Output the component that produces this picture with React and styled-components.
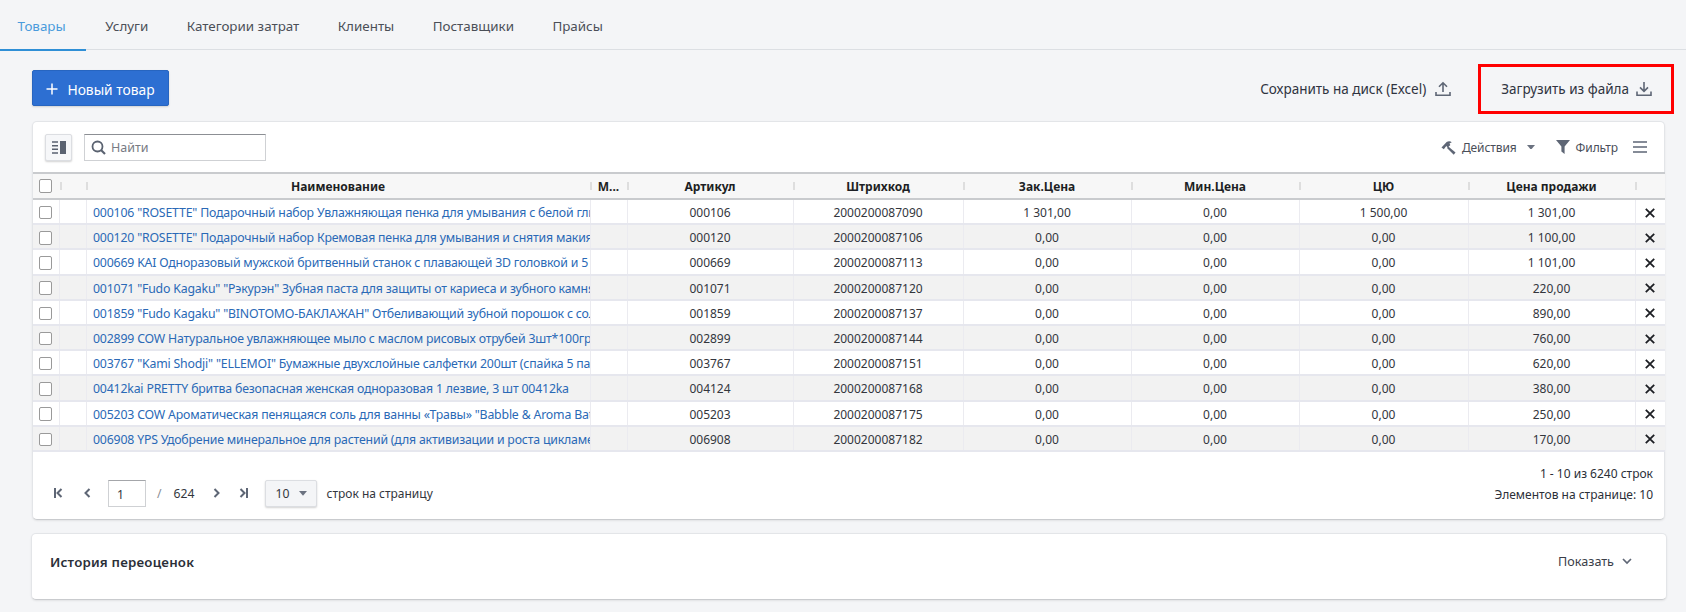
import React from 'react';
import styled, { createGlobalStyle } from 'styled-components';

const tabs = ['Товары', 'Услуги', 'Категории затрат', 'Клиенты', 'Поставщики', 'Прайсы'];

const rows = [
    { name: '000106 "ROSETTE" Подарочный набор Увлажняющая пенка для умывания с белой глиной', sku: '000106', code: '2000200087090', buy: '1 301,00', cyu: '1 500,00', price: '1 301,00' },
    { name: '000120 "ROSETTE" Подарочный набор Кремовая пенка для умывания и снятия макияжа', sku: '000120', code: '2000200087106', buy: '0,00', cyu: '0,00', price: '1 100,00' },
    { name: '000669 KAI Одноразовый мужской бритвенный станок с плавающей 3D головкой и 5 лезвиями', sku: '000669', code: '2000200087113', buy: '0,00', cyu: '0,00', price: '1 101,00' },
    { name: '001071 "Fudo Kagaku" "Рэкурэн" Зубная паста для защиты от кариеса и зубного камня', sku: '001071', code: '2000200087120', buy: '0,00', cyu: '0,00', price: '220,00' },
    { name: '001859 "Fudo Kagaku" "BINOTOMO-БАКЛАЖАН" Отбеливающий зубной порошок с солью', sku: '001859', code: '2000200087137', buy: '0,00', cyu: '0,00', price: '890,00' },
    { name: '002899 COW Натуральное увлажняющее мыло с маслом рисовых отрубей 3шт*100гр', sku: '002899', code: '2000200087144', buy: '0,00', cyu: '0,00', price: '760,00' },
    { name: '003767 "Kami Shodji" "ELLEMOI" Бумажные двухслойные салфетки 200шт (спайка 5 пачек)', sku: '003767', code: '2000200087151', buy: '0,00', cyu: '0,00', price: '620,00' },
    { name: '00412kai PRETTY бритва безопасная женская одноразовая 1 лезвие, 3 шт 00412ka', sku: '004124', code: '2000200087168', buy: '0,00', cyu: '0,00', price: '380,00' },
    { name: '005203 COW Ароматическая пенящаяся соль для ванны «Травы» "Babble & Aroma Bath"', sku: '005203', code: '2000200087175', buy: '0,00', cyu: '0,00', price: '250,00' },
    { name: '006908 YPS Удобрение минеральное для растений (для активизации и роста цикламенов)', sku: '006908', code: '2000200087182', buy: '0,00', cyu: '0,00', price: '170,00' },
];

const columnWidths = [26.5, 26.5, 504, 37, 166, 170, 168, 168, 169, 167, 30];

const GlobalStyle = createGlobalStyle`
    html, body {
        margin: 0;
        background: #f4f5f7;
    }
    body {
        font-family: "Noto Sans", "Open Sans", sans-serif;
        font-size: 13px;
        color: #2b2f38;
    }
`;

const TabBar = styled.nav`
    display: flex;
    height: 49px;
    border-bottom: 1px solid #dcdfe3;
`;
const Tab = styled.div`
    box-sizing: content-box;
    padding: 3px ${props => props.$active ? '20.5px' : '19.2px'} 0 ${props => props.$active ? '17.5px' : '19.2px'};
    display: flex;
    align-items: center;
    height: 46px;
    font-size: 13.4px;
    color: ${props => props.$active ? '#4a9bdc' : '#4b4f57'};
    border-bottom: 2px solid ${props => props.$active ? '#2f8fd6' : 'transparent'};
`;
const Content = styled.main`
    padding: 20px 21px 12px 32px;
`;
const TopRow = styled.div`
    display: flex;
    justify-content: space-between;
    align-items: center;
    height: 36px;
    margin-bottom: 15px;
`;
const PrimaryButton = styled.button`
    width: 137px;
    height: 36px;
    padding: 2px 0 0;
    display: flex;
    align-items: center;
    justify-content: center;
    gap: 9px;
    border: 1px solid #2765c0;
    border-radius: 2px;
    background: #2d6fd2;
    color: #fff;
    font: inherit;
    font-size: 13.8px;
    box-shadow: 0 1px 2px rgba(0, 0, 0, 0.15);
`;
const TopActions = styled.div`
    display: flex;
    align-items: center;
    gap: 50px;
    margin-right: 13px;
`;
const FileAction = styled.div`
    position: relative;
    display: flex;
    align-items: center;
    gap: ${props => props.$marked ? 7 : 9}px;
    font-size: 13.5px;
    color: #2f3340;
    top: 1px;
    ${props => props.$marked && `
        &::after {
            content: "";
            position: absolute;
            left: -23px;
            right: -22px;
            top: -16px;
            bottom: -16px;
            border: 3px solid #ff0000;
        }
    `}
`;
const Card = styled.section`
    background: #fff;
    border: 1px solid #e3e5e8;
    border-bottom-color: #c9cbce;
    border-radius: 5px;
    box-shadow: 0 1px 2px rgba(0, 0, 0, 0.08);
`;
const Toolbar = styled.div`
    display: flex;
    align-items: center;
    height: 50px;
    padding: 0 17px 0 12px;
`;
const IconButton = styled.button`
    width: 27px;
    height: 27px;
    padding: 0;
    display: flex;
    align-items: center;
    justify-content: center;
    background: #f6f7f9;
    border: 1px solid #dcdee2;
    border-radius: 2px;
    box-shadow: 0 1px 2px rgba(0, 0, 0, 0.18);
`;
const SearchBox = styled.div`
    width: 182px;
    height: 27px;
    box-sizing: border-box;
    margin-left: 12px;
    padding-left: 6px;
    display: flex;
    align-items: center;
    gap: 5px;
    border: 1px solid #cfd1d4;
    border-top-color: #8c8f94;
    color: #777b84;
    font-size: 12.5px;
`;
const ToolbarRight = styled.div`
    margin-left: auto;
    display: flex;
    align-items: center;
    font-size: 12px;
    letter-spacing: -0.1px;
    color: #4a4e59;
`;
const ToolAction = styled.div`
    display: flex;
    align-items: center;
    gap: 6px;
    margin-right: ${props => props.$gap || 0}px;
`;
const CaretSlot = styled.span`
    display: flex;
    margin-left: 4px;
`;
const Grid = styled.table`
    width: 1632px;
    table-layout: fixed;
    border-collapse: collapse;
    border-top: 2px solid #c9cbce;
    border-bottom: 2px solid #c9cbce;
`;
const Col = styled.col`
    width: ${props => props.$w}px;
`;
const HeadCell = styled.th`
    height: 24px;
    padding: 0;
    background: #f7f7f7;
    border-bottom: 2px solid #c9cbce;
    font-size: 12px;
    font-weight: 700;
    color: #1d1f24;
    text-align: center;
    white-space: nowrap;
    overflow: hidden;
    position: relative;
    &:not(:first-child)::before {
        content: "";
        position: absolute;
        left: -1px;
        top: 8px;
        height: 8px;
        width: 3px;
        background: #dedede;
    }
`;
const Row = styled.tr`
    height: 25.2px;
    background: ${props => props.$odd ? '#f2f2f2' : '#fff'};
`;
const Cell = styled.td`
    padding: 2px 0 0;
    height: 25.2px;
    box-sizing: border-box;
    border-bottom: 2px solid #e6e7ee;
    border-left: 1px solid #ebebf0;
    font-size: 12px;
    color: #33363d;
    text-align: center;
    white-space: nowrap;
    overflow: hidden;
    &:first-child {
        border-left: 0;
    }
`;
const NameCell = styled(Cell)`
    text-align: left;
    padding-left: 6.5px;
    color: #2a69b6;
    font-size: 12.3px;
    letter-spacing: -0.18px;
`;
const Check = styled.span`
    display: block;
    width: 11.5px;
    height: 11.5px;
    margin-left: 5.5px;
    border: 1.5px solid #9a9a9a;
    border-radius: 2px;
    background: #fff;
`;
const Footer = styled.div`
    height: 67px;
    display: flex;
    justify-content: space-between;
    padding: 0 11px 0 20px;
`;
const Pager = styled.div`
    display: flex;
    align-items: center;
    height: 27px;
    margin-top: 28px;
    font-size: 12.2px;
    color: #33363d;
`;
const PagerIcon = styled.span`
    display: flex;
    width: 10px;
    justify-content: center;
    margin-left: ${props => props.$before || 0}px;
    margin-right: ${props => props.$gap || 0}px;
`;
const PageInput = styled.div`
    width: 38px;
    height: 27px;
    box-sizing: border-box;
    padding: 3px 0 0 8px;
    display: flex;
    align-items: center;
    border: 1px solid #cfd1d4;
    border-top-color: #a4a6aa;
    margin-right: 11px;
`;
const Slash = styled.span`
    color: #8a8d94;
    margin-right: 12px;
`;
const PageSelect = styled.div`
    width: 52px;
    height: 27px;
    box-sizing: border-box;
    padding: 0 9px;
    margin: 0 9px 0 17px;
    display: flex;
    align-items: center;
    justify-content: space-between;
    background: #f4f5f7;
    border: 1px solid #dcdee2;
    border-radius: 2px;
    box-shadow: 0 1px 2px rgba(0, 0, 0, 0.18);
`;
const RowsLabel = styled.span`
    font-size: 12px;
`;
const PagerInfo = styled.div`
    margin-top: 11px;
    text-align: right;
    font-size: 12px;
    line-height: 21px;
    color: #2b2f38;
`;
const HistoryCard = styled(Card)`
    margin: 13px -2px 0 -1px;
    height: 67px;
    box-sizing: border-box;
    display: flex;
    justify-content: space-between;
    padding: 17px 34px 0 18px;
    line-height: 22px;
`;
const HistoryTitle = styled.div`
    font-size: 13.3px;
    font-weight: 600;
    letter-spacing: 0.2px;
    color: #2b2f38;
`;
const ShowToggle = styled.div`
    display: flex;
    align-items: center;
    height: 22px;
    gap: 8px;
    font-size: 12.6px;
    color: #3a3e48;
`;
const Close = styled.svg`
    display: block;
    margin: 0 auto;
`;

const PlusIcon = () => (
    <svg width="12" height="12" viewBox="0 0 12 12"><path d="M6 0.5v11M0.5 6h11" stroke="#fff" strokeWidth="1.5" /></svg>
);
const UploadIcon = () => (
    <svg width="16" height="16" viewBox="0 0 16 16" fill="none" stroke="#5e6675" strokeWidth="1.6"><path d="M8 11V2M4 5.8 8 1.8l4 4M1 11v3.2h14V11" /></svg>
);
const DownloadIcon = () => (
    <svg width="16" height="16" viewBox="0 0 16 16" fill="none" stroke="#5e6675" strokeWidth="1.6"><path d="M8 1v9M4 6.4l4 4 4-4M1 10.5v3.7h14v-3.7" /></svg>
);
const ColumnsIcon = () => (
    <svg width="14" height="13" viewBox="0 0 14 13"><path d="M0 1h6M0 4.7h6M0 8.3h6M0 12h6" stroke="#5a6270" strokeWidth="1.5" /><rect x="8" y="0" width="6" height="13" fill="#5a6270" /></svg>
);
const SearchIcon = () => (
    <svg width="15" height="15" viewBox="0 0 15 15" fill="none" stroke="#5a6270" strokeWidth="1.8"><circle cx="6.5" cy="6.5" r="5" /><path d="M10 10l4 4" strokeWidth="2.2" /></svg>
);
const HammerIcon = () => (
    <svg width="15" height="15" viewBox="0 0 16 16" fill="#5e6675"><path d="M0.5 8 6 2.2C8 1 10 1.2 11.5 2.5L9 3.8 10 5.2 7.2 8 5.6 6.4 3 9.8Z" /><path d="M7.8 6.8 15.5 13.4 13.6 15.6 6.4 8.4Z" /></svg>
);
const Caret = ({ size = 8 }) => (
    <svg width={size} height={size * 0.6} viewBox="0 0 10 6" fill="#6b7280"><path d="M0 0h10L5 6Z" /></svg>
);
const FunnelIcon = () => (
    <svg width="14" height="14" viewBox="0 0 14 14" fill="#5e6675"><path d="M0 0h14L8.6 6.4V14L5.4 11.6V6.4Z" /></svg>
);
const MenuIcon = () => (
    <svg width="14" height="12" viewBox="0 0 14 12" stroke="#5e6675" strokeWidth="1.6"><path d="M0 1h14M0 6h14M0 11h14" /></svg>
);
const PagerArrow = ({ d }) => (
    <svg width="9" height="10" viewBox="0 0 9 10" fill="none" stroke="#5e6675" strokeWidth="2"><path d={d} /></svg>
);
const ChevronDown = () => (
    <svg width="10" height="7" viewBox="0 0 10 7" fill="none" stroke="#5e6675" strokeWidth="1.7"><path d="M1 1l4 4 4-4" /></svg>
);
const CloseIcon = () => (
    <Close width="10" height="10" viewBox="0 0 10 10" stroke="#1d1f24" strokeWidth="1.8"><path d="M0.8 0.8l8.4 8.4M9.2 0.8L0.8 9.2" /></Close>
);

const App = () => {
    return (
        <>
            <GlobalStyle />
            <TabBar>
                {tabs.map((tab, i) => <Tab key={tab} $active={i === 0}>{tab}</Tab>)}
            </TabBar>
            <Content>
                <TopRow>
                    <PrimaryButton><PlusIcon />Новый товар</PrimaryButton>
                    <TopActions>
                        <FileAction>Сохранить на диск (Excel)<UploadIcon /></FileAction>
                        <FileAction $marked>Загрузить из файла<DownloadIcon /></FileAction>
                    </TopActions>
                </TopRow>
                <Card>
                    <Toolbar>
                        <IconButton><ColumnsIcon /></IconButton>
                        <SearchBox><SearchIcon />Найти</SearchBox>
                        <ToolbarRight>
                            <ToolAction $gap={21}><HammerIcon />Действия<CaretSlot><Caret /></CaretSlot></ToolAction>
                            <ToolAction $gap={15}><FunnelIcon />Фильтр</ToolAction>
                            <MenuIcon />
                        </ToolbarRight>
                    </Toolbar>
                    <Grid>
                        <colgroup>
                            {columnWidths.map((w, i) => <Col key={i} $w={w} />)}
                        </colgroup>
                        <thead>
                            <tr>
                                <HeadCell><Check /></HeadCell>
                                <HeadCell />
                                <HeadCell>Наименование</HeadCell>
                                <HeadCell>М...</HeadCell>
                                <HeadCell>Артикул</HeadCell>
                                <HeadCell>Штрихкод</HeadCell>
                                <HeadCell>Зак.Цена</HeadCell>
                                <HeadCell>Мин.Цена</HeadCell>
                                <HeadCell>ЦЮ</HeadCell>
                                <HeadCell>Цена продажи</HeadCell>
                                <HeadCell />
                            </tr>
                        </thead>
                        <tbody>
                            {rows.map((row, i) => (
                                <Row key={row.sku} $odd={i % 2 === 1}>
                                    <Cell><Check /></Cell>
                                    <Cell />
                                    <NameCell>{row.name}</NameCell>
                                    <Cell />
                                    <Cell>{row.sku}</Cell>
                                    <Cell>{row.code}</Cell>
                                    <Cell>{row.buy}</Cell>
                                    <Cell>0,00</Cell>
                                    <Cell>{row.cyu}</Cell>
                                    <Cell>{row.price}</Cell>
                                    <Cell><CloseIcon /></Cell>
                                </Row>
                            ))}
                        </tbody>
                    </Grid>
                    <Footer>
                        <Pager>
                            <PagerIcon $gap={19}><PagerArrow d="M1 0v10M7.5 1 3.5 5l4 4" /></PagerIcon>
                            <PagerIcon $gap={16}><PagerArrow d="M6.5 1 2.5 5l4 4" /></PagerIcon>
                            <PageInput>1</PageInput>
                            <Slash>/</Slash>
                            <span>624</span>
                            <PagerIcon $before={17} $gap={17}><PagerArrow d="M2.5 1l4 4-4 4" /></PagerIcon>
                            <PagerIcon><PagerArrow d="M8 0v10M1.5 1l4 4-4 4" /></PagerIcon>
                            <PageSelect>10<Caret /></PageSelect>
                            <RowsLabel>строк на страницу</RowsLabel>
                        </Pager>
                        <PagerInfo>
                            <div>1 - 10 из 6240 строк</div>
                            <div>Элементов на странице: 10</div>
                        </PagerInfo>
                    </Footer>
                </Card>
                <HistoryCard>
                    <HistoryTitle>История переоценок</HistoryTitle>
                    <ShowToggle>Показать<ChevronDown /></ShowToggle>
                </HistoryCard>
            </Content>
        </>
    );
};

export default App;
